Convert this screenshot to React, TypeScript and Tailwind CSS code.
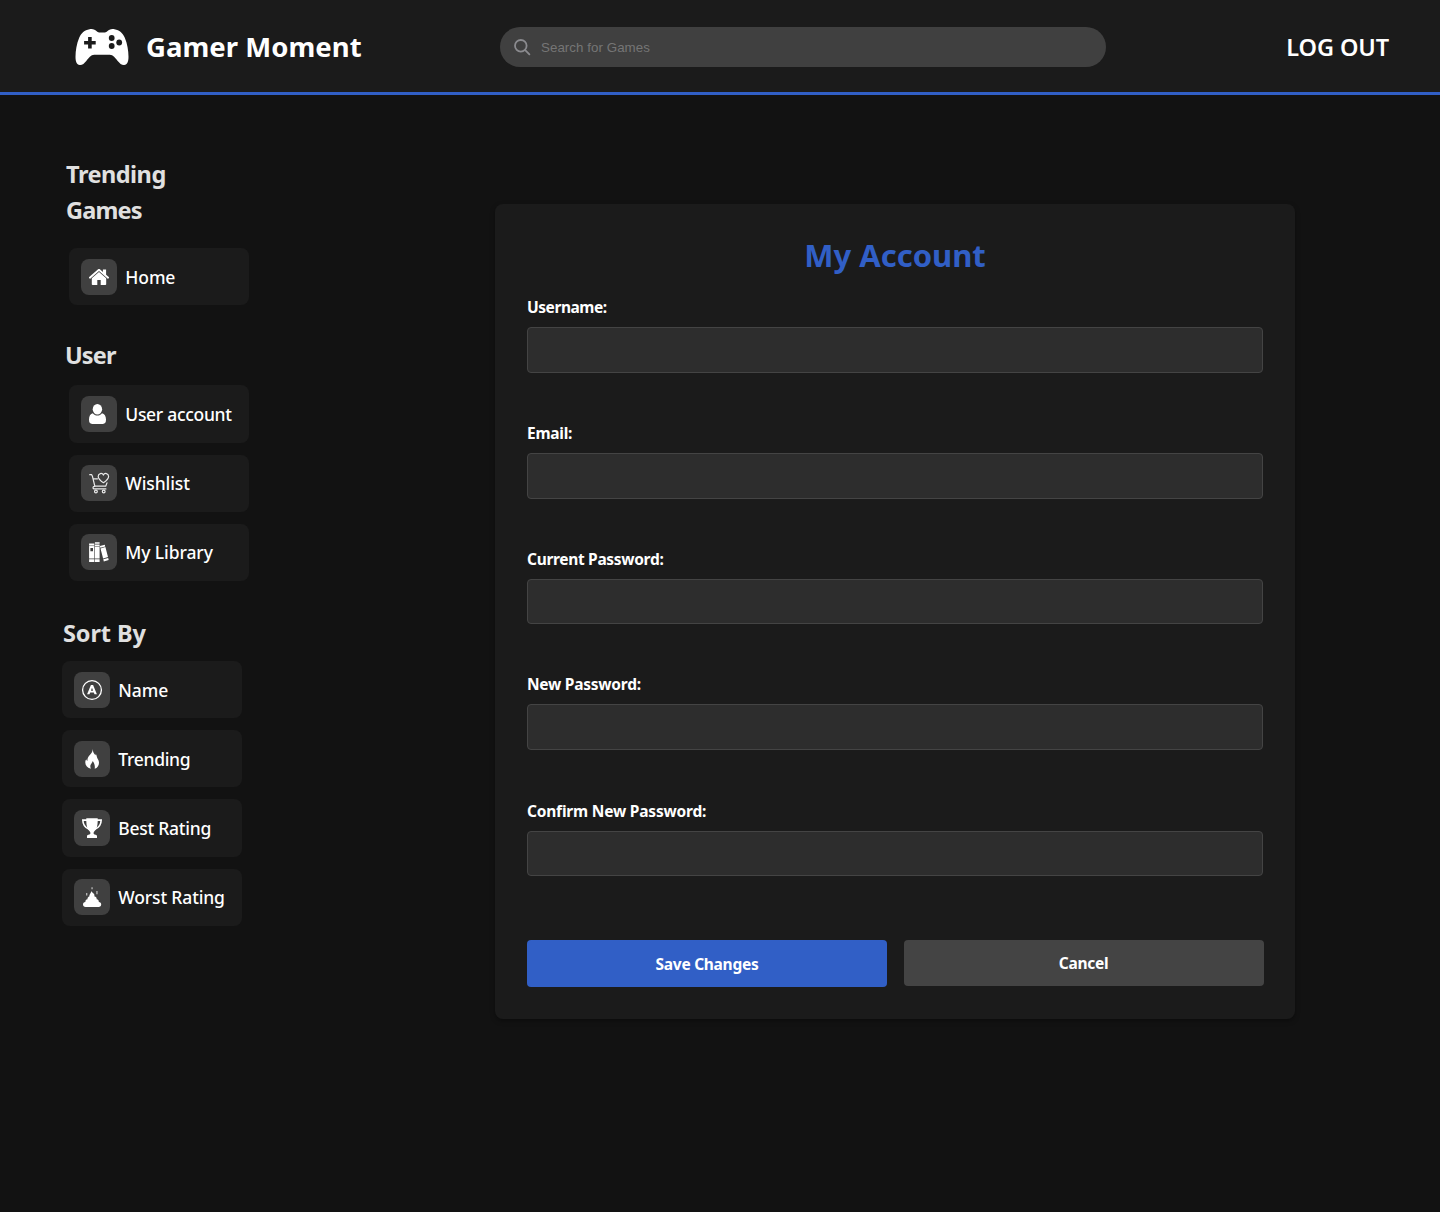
import type { ReactNode } from 'react'

function GamepadIcon() {
  return (
    <svg viewBox="0 0 54 38" className="h-[38px] w-[54px] shrink-0">
      <path
        fill="#fff"
        d="M14.500 1.200C17.800.6 20.200 1.600 22 3.500c.9.9 1.700 1 2.900 1h4.200c1.200 0 2-.1 2.900-1C33.800 1.600 36.200.6 39.500 1.200c5 .8 8.200 3.700 10.300 8.600 2.500 5.700 3.700 13 3.700 19 0 4.500-1.100 8-4.300 8.200-2.600.2-4.400-1.500-6.500-4-2.500-3-4.500-6.200-7.900-6.200H19.200c-3.400 0-5.400 3.200-7.900 6.200-2.100 2.500-3.900 4.200-6.500 4C1.600 36.800.5 33.300.5 28.800c0-6 1.200-13.300 3.700-19C6.300 4.900 9.500 2 14.500 1.200z"
      />
      <path fill="#1b1b1b" d="M13.100 9h3.600v4h4v3.600h-4v4h-3.600v-4h-4V13h4z" />
      <g fill="#1b1b1b">
        <circle cx="36.700" cy="10" r="2.900" />
        <circle cx="36.700" cy="18" r="2.900" />
        <circle cx="44.200" cy="14.500" r="2.900" />
      </g>
    </svg>
  )
}

function SearchIcon() {
  return (
    <svg viewBox="0 0 17 17" className="h-[17px] w-[17px] shrink-0" fill="none" stroke="#8b8b8f" strokeWidth="1.8" strokeLinecap="round">
      <circle cx="6.800" cy="6.800" r="5.800" />
      <path d="m11.200 11.200 4.200 4.100" />
    </svg>
  )
}

function Glyph({ children }: { children: ReactNode }) {
  return (
    <svg viewBox="0 0 36 36" className="h-9 w-9 shrink-0 rounded-lg bg-[#404040]" fill="#fff">
      {children}
    </svg>
  )
}

const glyphs = {
  home: (
    <Glyph>
      <path d="m18 12.900-7.200 6.300v6c0 .5.300.8.800.8h4.700v-5.100h3.400V26h4.700c.5 0 .8-.3.800-.8v-6z" />
      <path d="M17.100 10.300c.5-.4 1.300-.4 1.800 0l3 2.600v-2.300h3.200v5.100l2.700 2.400c.3.300.3.600.1.900l-.5.500c-.3.300-.6.300-.9 0L18 12 9.500 19.500c-.3.300-.6.300-.9 0l-.5-.5c-.2-.3-.2-.6.100-.9z" />
    </Glyph>
  ),
  user: (
    <Glyph>
      <ellipse cx="16.400" cy="13.200" rx="4.700" ry="5.300" />
      <path d="M11.800 17.300c1.200 1.500 2.800 2.300 4.600 2.300s3.400-.8 4.600-2.300c2.500.5 4 2.900 4 6.300 0 2.900-.8 4.400-3.200 4.400H11.200C8.800 28 8 26.500 8 23.600c0-3.400 1.400-5.800 3.800-6.300z" />
    </Glyph>
  ),
  wishlist: (
    <Glyph>
      <g fill="none" stroke="#e8e8e8" strokeWidth="1.200" strokeLinecap="round" strokeLinejoin="round">
        <path d="M8.700 9.700h2l.7 1.500 2.500 10.300M12 13.800h4.500M14 21.200h10.700l1.300-3.300M13.500 21.300c-1.900.2-2.100 2.600 0 2.600h11.400" />
        <path d="M22.400 17.700c-3.100-2.200-5.200-4-5.200-6.300 0-3.100 4-4 5.200-1.300 1.200-2.700 5.200-1.800 5.200 1.300 0 2.300-2.100 4.100-5.200 6.300z" />
        <circle cx="14.900" cy="26.500" r="1.400" />
        <circle cx="22.700" cy="26.500" r="1.400" />
      </g>
    </Glyph>
  ),
  library: (
    <Glyph>
      <path d="M8.100 9.500h5.200v15.100H8.100zM8.100 25.300h5.200V28H8.100zM13.900 8.300h4.700v1.500h-4.700zM13.900 10.600h4.700v14h-4.700zM13.900 25.300h4.700V28h-4.700z" />
      <path d="m18.900 12.100 4.900-1.300.4 1.600-4.900 1.300zM19.500 14.400l4.900-1.300 2.600 10-4.900 1.300zM22.300 25.200l4.900-1.300.5 2.200-4.900 1.300z" />
      <path fill="#404040" d="M9.400 14h2.600v3.200H9.400z" />
      <path stroke="#404040" strokeWidth=".5" d="M8.100 11.600h5.200M13.900 12.500h4.700" />
    </Glyph>
  ),
  name: (
    <Glyph>
      <circle cx="18" cy="18" r="9.400" fill="none" stroke="#fff" strokeWidth="1.300" />
      <path fillRule="evenodd" d="M16.900 12.900h2.200l3.800 9.400h-2.400l-.7-1.900h-3.600l-.7 1.900h-2.400zm1.100 2.800-1.100 3h2.200z" />
    </Glyph>
  ),
  trending: (
    <Glyph>
      <path d="M18.800 8c.1 3.300 1.100 4.600 2.700 6.200.3-.5.300-1.100.1-1.800 1.500 2 .9 3.400 1.900 5.100.7 1.200 1.500 2.300 1.500 4.200 0 2.900-1.600 5.100-4.300 6.100.5-2.800-.3-5.800-2-7.800-.2 1.900-2.400 2.900-2.400 5.100 0 .9.200 1.800.5 2.700-3.700-1.100-5.500-3.400-5.500-6.300 0-1.500.4-2.400.9-3.200.2.900.6 1.400 1.200 1.800-.1-3.100 1-4.700 2.600-6.300 1.600-1.600 2.600-3.200 2.800-5.800z" />
    </Glyph>
  ),
  best: (
    <Glyph>
      <path d="M12.300 8.300h11.400v2.900c0 4.700-1.200 8.500-3.500 10.300-.4.400-.6.900-.6 1.500 0 1 .6 1.600 2 1.800.9.200 1.400.7 1.400 1.500V28H13v-1.700c0-.8.5-1.300 1.400-1.500 1.400-.2 2-.8 2-1.800 0-.6-.2-1.100-.6-1.500-2.300-1.800-3.500-5.600-3.500-10.300z" />
      <path fill="none" stroke="#fff" strokeWidth="1.600" d="M13 10.100H8.800c.1 4.100 1.900 7.600 6.300 9.200M23 10.100h4.200c-.1 4.100-1.900 7.600-6.300 9.200" />
    </Glyph>
  ),
  worst: (
    <Glyph>
      <path d="M17.300 11.900c.5 1.400 2.300 2 2.900 3.400.4.800.3 1.400.1 2 1.700.4 2.600 1.500 2.400 3 1.600.3 2.300 1.400 2.100 2.700 1.600.3 2.400 1.200 2.400 2.500 0 1.500-1 2.400-2.600 2.400H11.600C10 27.900 9 27 9 25.500c0-1.300.8-2.200 2.400-2.500-.2-1.300.5-2.400 2.100-2.700-.2-1.500.6-2.500 2-3-.5-2.200 1.700-2.900 1.800-5.400z" />
      <path d="M17.500 8.300h1.100v2h-1.100zM12.200 13.900h1.100v2.600h-1.100zM22.400 12h1.100v3.200h-1.100z" opacity=".75" />
    </Glyph>
  ),
}

type Item = { label: string; icon: ReactNode; text?: string }

function Menu({ items }: { items: Item[] }) {
  return (
    <ul className="flex w-[180px] flex-col gap-3">
      {items.map((item) => (
        <li key={item.label} className="flex h-[57.25px] items-center gap-[8.300px] rounded-lg bg-[#1b1b1b] px-3">
          {item.icon}
          <span className={'text-[17.5px] leading-6 font-medium whitespace-nowrap text-white ' + (item.text ?? 'tracking-[-0.1px]')}>
            {item.label}
          </span>
        </li>
      ))}
    </ul>
  )
}

const userItems: Item[] = [
  { label: 'User account', icon: glyphs.user, text: 'tracking-[-0.3px]' },
  { label: 'Wishlist', icon: glyphs.wishlist },
  { label: 'My Library', icon: glyphs.library },
]

const sortItems: Item[] = [
  { label: 'Name', icon: glyphs.name },
  { label: 'Trending', icon: glyphs.trending, text: 'tracking-[-0.3px]' },
  { label: 'Best Rating', icon: glyphs.best, text: 'tracking-[-0.25px]' },
  { label: 'Worst Rating', icon: glyphs.worst, text: 'tracking-[-0.15px]' },
]

const fields = [
  { label: 'Username:', type: 'text', text: 'tracking-[-0.45px]', box: 'h-[46px] mb-12' },
  { label: 'Email:', type: 'email', text: 'tracking-[-0.25px]', box: 'h-[46px] mb-12' },
  { label: 'Current Password:', type: 'password', text: 'tracking-[-0.32px]', box: 'h-[45px] mb-12' },
  { label: 'New Password:', type: 'password', text: 'tracking-[-0.25px]', box: 'h-[46px] mb-[49px]' },
  { label: 'Confirm New Password:', type: 'password', text: 'tracking-[-0.2px]', box: 'h-[45px] mb-16' },
]

export default function App() {
  return (
    <div className="min-h-[1212px] bg-[#121212] font-['Noto_Sans',sans-serif] text-white">
      <header className="flex h-[95px] items-center border-b-3 border-[#315fc6] bg-[#1b1b1b] pr-[51px] pl-[74.500px]">
        <div className="flex w-[425.500px] items-center gap-[17.500px] pt-0.5">
          <GamepadIcon />
          <span className="text-[27.5px] leading-9 font-bold tracking-[0.04px] whitespace-nowrap">Gamer Moment</span>
        </div>
        <label className="mt-0.5 flex h-10 w-[606px] items-center gap-2.5 rounded-full bg-[#404040] pl-3.5">
          <SearchIcon />
          <input
            placeholder="Search for Games"
            className="w-full bg-transparent pt-0.5 font-['Liberation_Sans',sans-serif] text-[13.33px] tracking-[0.05px] outline-none placeholder:text-[#757575]"
          />
        </label>
        <a href="#logout" className="mt-px ml-auto text-[23.5px] leading-8 font-semibold tracking-[-0.1px] whitespace-nowrap">
          LOG OUT
        </a>
      </header>

      <div className="flex items-start">
        <aside className="w-[495px] shrink-0 pt-[61px]">
          <section className="ml-[66px]">
            <h2 className="flex flex-col text-[23.5px] leading-9 font-bold text-[#e0e0e0]">
              <span className="tracking-[-0.5px]">Trending </span>
              <span className="tracking-[-0.8px]">Games</span>
            </h2>
            <div className="mt-5 ml-[3px]">
              <Menu items={[{ label: 'Home', icon: glyphs.home }]} />
            </div>
          </section>
          <section className="mt-[31.750px] ml-[65px]">
            <h2 className="text-[23.5px] leading-9 font-bold tracking-[-0.9px] text-[#e0e0e0]">User</h2>
            <div className="mt-[12.300px] ml-1">
              <Menu items={userItems} />
            </div>
          </section>
          <section className="mt-[34px] ml-[62px]">
            <h2 className="ml-px text-[23.5px] leading-9 font-bold tracking-[-0.1px] text-[#e0e0e0]">Sort By</h2>
            <div className="mt-[9.950px]">
              <Menu items={sortItems} />
            </div>
          </section>
        </aside>

        <main className="mt-[109px] h-[815px] w-[800px] rounded-lg bg-[#1b1b1b] px-8 pt-[31px] shadow-[0_2px_5px_rgba(0,0,0,0.35)]">
          <h1 className="mb-5 text-center text-[31px] leading-10 font-bold text-[#315fc6]">My Account</h1>
          <form className="flex flex-col">
            {fields.map((f) => (
              <label key={f.label} className="flex flex-col text-[15.5px] leading-6 font-bold">
                <span className={'mb-2 ' + f.text}>{f.label}</span>
                <input type={f.type} className={'w-full rounded-sm border border-[#444] bg-[#2d2d2d] px-3 outline-none ' + f.box} />
              </label>
            ))}
            <div className="flex items-start gap-[17px] text-[15.5px] leading-6 font-bold tracking-[-0.28px]">
              <button type="button" className="h-[47px] w-[360px] shrink-0 rounded-sm bg-[#315fc6] pt-px">
                Save Changes
              </button>
              <button type="button" className="h-[46px] w-[360px] shrink-0 rounded-sm bg-[#444] pr-px">
                Cancel
              </button>
            </div>
          </form>
        </main>
      </div>
    </div>
  )
}
